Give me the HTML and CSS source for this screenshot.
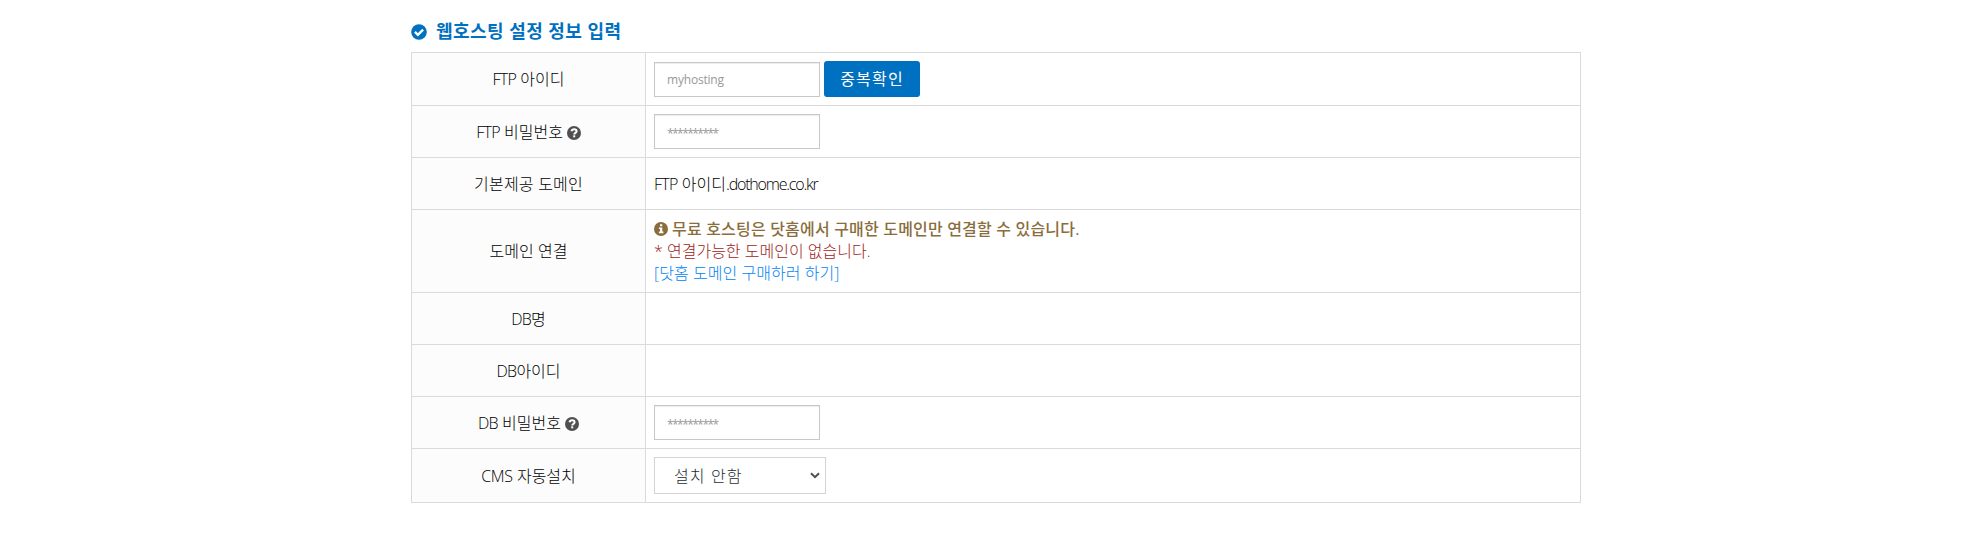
FILE: index.html
```html
<!DOCTYPE html>
<html lang="ko">
<head>
<meta charset="utf-8">
<title>웹호스팅 설정 정보 입력</title>
<link rel="stylesheet" href="styles.css">
</head>
<body>
<svg class="defs" width="0" height="0" aria-hidden="true">
  <symbol id="question" viewBox="0 0 14 14"><circle cx="7" cy="7" r="7" fill="currentColor"/><path d="M4.500 5.300C4.800 4 5.800 3.300 7.100 3.300c1.500 0 2.500.8 2.500 2C9.600 6.900 7.200 6.800 7.200 8.500" fill="none" stroke="#fff" stroke-width="2"/><path d="M6.200 9.300h2v2h-2z" fill="#fff"/></symbol>
</svg>
<main class="page">
  <h1 class="title">
    <svg class="title-icon" viewBox="0 0 16 16"><circle cx="8" cy="8" r="7.800" fill="currentColor"/><path d="M3.900 7.800l3 3 5.200-5.200" fill="none" stroke="#fff" stroke-width="2.400"/></svg>
    <span>웹호스팅 설정 정보 입력</span>
  </h1>
  <table class="form">
    <tr class="row-first"><th><span class="latin">FTP</span> 아이디</th><td><div class="line"><input class="field" placeholder="myhosting"><button class="check">중복확인</button></div></td></tr>
    <tr class="row"><th><span class="latin">FTP</span> 비밀번호<svg class="help"><use href="#question"/></svg></th><td><div class="line"><input class="field password" placeholder="**********"></div></td></tr>
    <tr class="row"><th><span class="wide">기본제공 도메인</span></th><td><span class="latin">FTP</span> 아이디<span class="host">.dothome.co.kr</span></td></tr>
    <tr class="row-notice"><th>도메인 연결</th><td>
      <p class="notice"><svg class="info" viewBox="0 0 14 14"><circle cx="7" cy="7" r="7" fill="currentColor"/><path d="M6 2.300h2.300v2H6zM4.900 5.400h3.400v4.200h1.100v1.700H4.900V9.600H6V7.100H4.900z" fill="#fff"/></svg><span>무료 호스팅은 닷홈에서 구매한 도메인만 연결할 수 있습니다.</span></p>
      <p class="warning">* 연결가능한 도메인이 없습니다.</p>
      <p><a class="buy">[닷홈 도메인 구매하러 하기]</a></p>
    </td></tr>
    <tr class="row"><th><span class="latin">DB</span>명</th><td></td></tr>
    <tr class="row"><th><span class="latin">DB</span>아이디</th><td></td></tr>
    <tr class="row"><th><span class="latin">DB</span> 비밀번호<svg class="help"><use href="#question"/></svg></th><td><div class="line"><input class="field password" placeholder="**********"></div></td></tr>
    <tr class="row-last"><th><span class="cms">CMS</span> 자동설치</th><td><div class="select"><span>설치 안함</span><svg class="arrow" viewBox="0 0 10 7"><path d="M1 1.200l4 4 4-4" fill="none" stroke="currentColor" stroke-width="2"/></svg></div></td></tr>
  </table>
</main>
</body>
</html>
```
FILE: styles.css
```css
* { box-sizing: border-box; }
body { margin: 0; background: #fff; color: #000; font-family: "Open Sans", "Noto Sans CJK KR", sans-serif; font-size: 16px; font-weight: 300; }
.defs { display: none; }
.page { width: 1170px; margin: 0 0 0 411px; padding-top: 16px; }
.title { display: flex; align-items: center; gap: 9px; height: 27px; margin: 0 0 9px; color: #0070c0; font-size: 18px; font-weight: 700; letter-spacing: .45px; white-space: nowrap; }
.title-icon { width: 16px; height: 16px; margin-top: 4px; }
.form { width: 1170px; border-collapse: collapse; table-layout: fixed; }
th, td { height: inherit; padding: 0; border: 1px solid #dadada; line-height: 22px; vertical-align: middle; }
th { width: 234px; background: #fcfcfc; font-weight: 300; white-space: nowrap; }
td { padding-left: 8px; }
.row-first { height: 53px; }
.row { height: 52px; }
.row-notice { height: 83px; }
.row-last { height: 54px; }
.latin { letter-spacing: -.7px; }
.cms { letter-spacing: -.3px; }
.wide { letter-spacing: .2px; }
.host { letter-spacing: -1.2px; }
.line { display: flex; align-items: center; gap: 4px; }
.field { width: 166px; height: 35px; margin: 0; padding: 0 12px; border: 1px solid #c8c8c8; border-radius: 0; box-shadow: inset 0 1px 1px rgba(0,0,0,.075); font: 400 12px "Open Sans", sans-serif; letter-spacing: -.2px; }
.field::placeholder { color: #999; opacity: 1; }
.password { padding-top: 4px; letter-spacing: -1.55px; }
.check { width: 96px; height: 36px; padding: 0 0 2px; border: 0; border-radius: 3px; background: #0070c0; color: #fff; font: 400 16px "Noto Sans CJK KR", sans-serif; letter-spacing: 1.2px; }
.help { width: 14px; height: 14px; margin-left: 4px; vertical-align: -2px; color: #505050; }
p { display: flex; align-items: center; height: 22px; margin: 0; white-space: nowrap; }
.notice { gap: 4px; color: #8a6d3b; font-weight: 500; letter-spacing: .19px; }
.info { width: 14px; height: 14px; }
.warning { color: #9c2421; }
.buy { color: #0084f5; letter-spacing: .05px; }
.select { display: flex; align-items: center; justify-content: space-between; width: 172px; height: 37px; padding: 0 5px 0 19px; border: 1px solid #d5d5d5; color: #252d35; letter-spacing: 1.1px; }
.arrow { width: 10px; height: 7px; color: #495057; }
```
